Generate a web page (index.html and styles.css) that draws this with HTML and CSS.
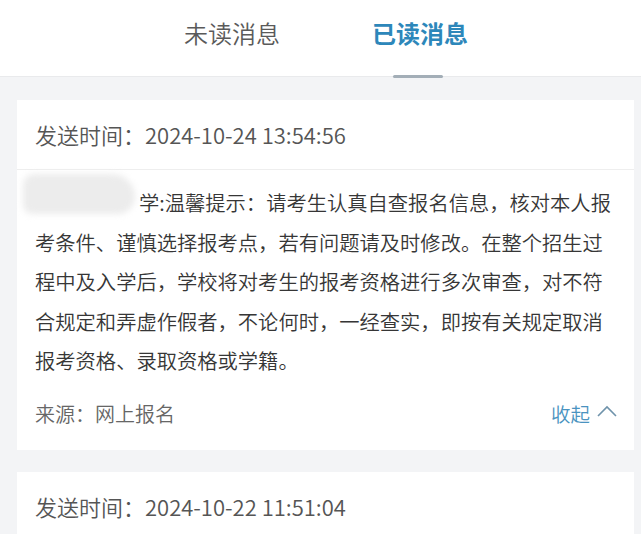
FILE: index.html
```html
<!DOCTYPE html>
<html lang="zh-CN">
<head>
<meta charset="utf-8">
<title>消息</title>
<link rel="stylesheet" href="styles.css">
</head>
<body>
<header class="tabs">
  <div class="tab">未读消息</div>
  <div class="tab active">已读消息</div>
</header>
<main class="list">
  <section class="card">
    <div class="time">发送时间<span class="colon">：</span>2024-10-24 13:54:56</div>
    <div class="body"><span class="blur"></span>学:温馨提示：请考生认真自查报名信息，核对本人报考条件、谨慎选择报考点，若有问题请及时修改。在整个招生过程中及入学后，学校将对考生的报考资格进行多次审查，对不符合规定和弄虚作假者，不论何时，一经查实，即按有关规定取消报考资格、录取资格或学籍。</div>
    <div class="foot">
      <span class="source">来源：网上报名</span>
      <span class="toggle">收起<svg class="chev" width="20" height="12" viewBox="0 0 20 12"><path d="M1 11 L10 2 L19 11" fill="none" stroke="#6f93ab" stroke-width="1.6"/></svg></span>
    </div>
  </section>
  <section class="card">
    <div class="time">发送时间<span class="colon">：</span>2024-10-22 11:51:04</div>
  </section>
</main>
</body>
</html>
```
FILE: styles.css
```css
html, body {
  margin: 0;
  padding: 0;
}
body {
  background: #f3f4f6;
  font-family: "Noto Sans CJK SC", "Noto Sans", sans-serif;
  font-weight: 350;
  overflow: hidden;
}
.tabs {
  height: 77px;
  box-sizing: border-box;
  background: #ffffff;
  border-bottom: 1px solid #e9eaec;
  display: flex;
  justify-content: center;
  gap: 92px;
  padding-left: 11px;
}
.tab {
  font-size: 24px;
  line-height: 66px;
  color: #5a5a5a;
  position: relative;
  height: 77px;
}
.tab.active {
  color: #2d87ba;
  font-weight: bold;
}
.tab.active::after {
  content: "";
  position: absolute;
  left: 21px;
  bottom: -1px;
  width: 50px;
  height: 3px;
  background: #a3aeb7;
  border-radius: 2px;
}
.list {
  padding: 23px 7px 0 17px;
  display: flex;
  flex-direction: column;
  gap: 22px;
}
.card {
  background: #ffffff;
  padding: 0 19px 17px 18px;
}
.time {
  height: 67px;
  padding: 0 19px 2px 18px;
  display: flex;
  align-items: center;
  font-size: 22px;
  color: #555555;
  border-bottom: 1px solid #eeeeee;
  margin: 0 -19px 0 -18px;
  white-space: nowrap;
}
.colon {
  letter-spacing: -0.5em;
  margin-right: 0.5em;
  display: inline-block;
  width: 0.5em;
  overflow: visible;
}
.body {
  padding-top: 13px;
  font-size: 20.3px;
  line-height: 39.5px;
  color: #363636;
}
.blur {
  display: inline-block;
  width: 112px;
  height: 40px;
  margin: -12px 4px 0 -12px;
  vertical-align: -3px;
  background: #ececec;
  border-radius: 20px 40px 30px 16px;
  filter: blur(3px);
}
.foot {
  margin-top: 12.5px;
  height: 40px;
  display: flex;
  align-items: center;
  justify-content: space-between;
  margin-right: -2px;
}
.source {
  font-size: 20px;
  color: #666666;
}
.toggle {
  font-size: 19.5px;
  color: #4a93c0;
  display: flex;
  align-items: center;
  gap: 7px;
}
.chev {
  margin-top: -4px;
}
```
